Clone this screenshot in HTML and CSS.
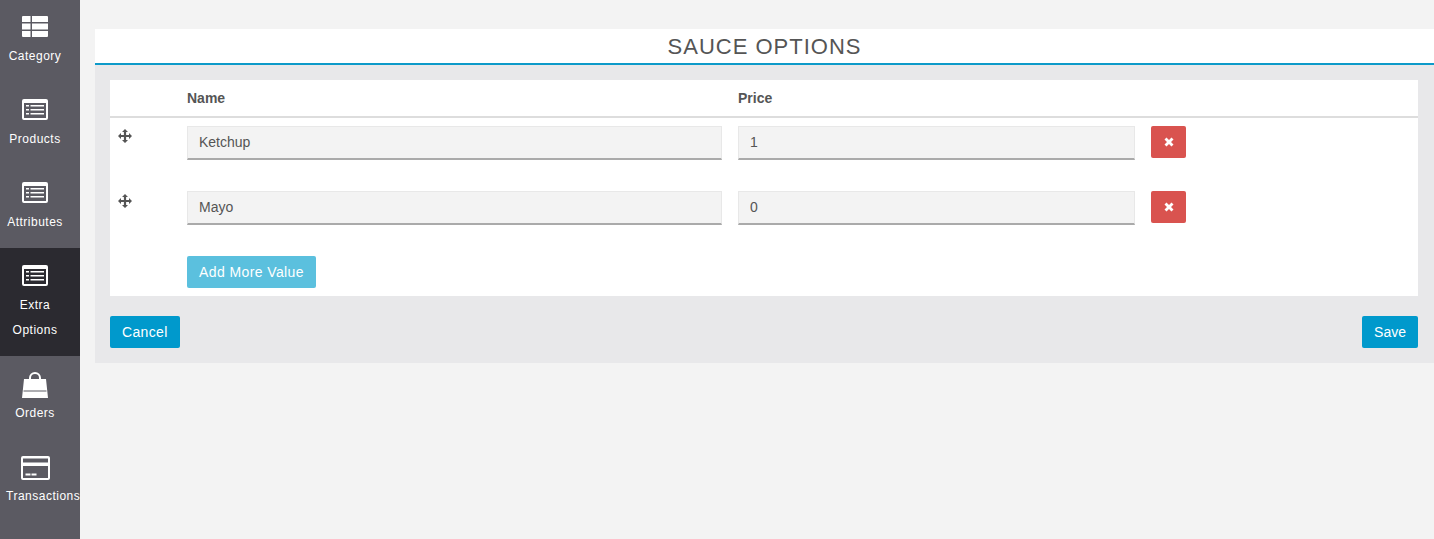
FILE: index.html
```html
<!DOCTYPE html>
<html lang="en">
<head>
    <meta charset="UTF-8">
    <title>Sauce Options</title>
    <link rel="stylesheet" href="styles.css">
</head>
<body>
    <svg class="defs" width="0" height="0">
        <symbol id="list-icon" viewBox="0 0 26 21">
            <path fill-rule="evenodd" d="M2 0h22a2 2 0 0 1 2 2v17a2 2 0 0 1-2 2H2a2 2 0 0 1-2-2V2a2 2 0 0 1 2-2zM2 4v15h22V4zM4 6h3v1.500H4zM8.500 6H22v1.500H8.500zM4 10h3v1.500H4zM8.500 10H22v1.500H8.500zM4 14h3v1.500H4zM8.500 14H22v1.500H8.500z" fill="#fff"/>
        </symbol>
        <symbol id="move-icon" viewBox="0 0 14 14">
            <path d="M7 0l3 3H8.100v2.900H11V4l3 3-3 3V8.100H8.100V11H10l-3 3-3-3h1.900V8.100H3V10L0 7l3-3v1.900h2.900V3H4z" fill="#555"/>
        </symbol>
    </svg>

    <nav class="sidebar">
        <a class="nav-item">
            <svg class="nav-icon" width="26" height="21" viewBox="0 0 26 21"><path d="M1 0h7.500v6H0V1a1 1 0 0 1 1-1zM10 0h15a1 1 0 0 1 1 1v5H10zM0 7.500h8.500v6H0zM10 7.500h16v6H10zM0 15h8.500v6H1a1 1 0 0 1-1-1zM10 15h16v5a1 1 0 0 1-1 1H10z" fill="#fff"/></svg>
            <span>Category</span>
        </a>
        <a class="nav-item">
            <svg class="nav-icon" width="26" height="21" viewBox="0 0 26 21"><use href="#list-icon"/></svg>
            <span>Products</span>
        </a>
        <a class="nav-item">
            <svg class="nav-icon" width="26" height="21" viewBox="0 0 26 21"><use href="#list-icon"/></svg>
            <span>Attributes</span>
        </a>
        <a class="nav-item active">
            <svg class="nav-icon" width="26" height="21" viewBox="0 0 26 21"><use href="#list-icon"/></svg>
            <span>Extra<br>Options</span>
        </a>
        <a class="nav-item nav-orders">
            <svg class="nav-icon" width="26" height="26" viewBox="0 0 26 26"><path fill-rule="evenodd" d="M2 7h22l2 19H0zM1.500 18.500v1h23v-1z" fill="#fff"/><path d="M8 11V6a5 5 0 0 1 10 0v5" fill="none" stroke="#fff" stroke-width="2"/></svg>
            <span>Orders</span>
        </a>
        <a class="nav-item nav-transactions">
            <svg class="nav-icon" width="29" height="24" viewBox="0 0 29 24"><path fill-rule="evenodd" d="M2 0h25a2 2 0 0 1 2 2v20a2 2 0 0 1-2 2H2a2 2 0 0 1-2-2V2a2 2 0 0 1 2-2zM2 2.500v4h25v-4zM2 10v12h25V10zM4.500 17.500h5v2h-5zM10.500 17.500h5v2h-5z" fill="#fff"/></svg>
            <span>Transactions</span>
        </a>
    </nav>

    <main class="content">
        <section class="panel">
            <h1 class="panel-title">SAUCE OPTIONS</h1>
            <div class="panel-body">
                <div class="table-card">
                    <div class="row head-row">
                        <div class="col-drag"></div>
                        <div class="col-name">Name</div>
                        <div class="col-price">Price</div>
                    </div>
                    <div class="row value-row">
                        <div class="col-drag"><svg class="drag-icon" width="14" height="14" viewBox="0 0 14 14"><use href="#move-icon"/></svg></div>
                        <div class="col-name"><input class="field" type="text" value="Ketchup"></div>
                        <div class="col-price"><input class="field" type="text" value="1"></div>
                        <button class="btn btn-remove"><svg width="10" height="10" viewBox="0 0 10 10"><path d="M2.500 0.500L5 3l2.500-2.500 2 2L7 5l2.500 2.500-2 2L5 7 2.500 9.500l-2-2L3 5 .5 2.500z" fill="#fff"/></svg></button>
                    </div>
                    <div class="row value-row">
                        <div class="col-drag"><svg class="drag-icon" width="14" height="14" viewBox="0 0 14 14"><use href="#move-icon"/></svg></div>
                        <div class="col-name"><input class="field" type="text" value="Mayo"></div>
                        <div class="col-price"><input class="field" type="text" value="0"></div>
                        <button class="btn btn-remove"><svg width="10" height="10" viewBox="0 0 10 10"><path d="M2.500 0.500L5 3l2.500-2.500 2 2L7 5l2.500 2.500-2 2L5 7 2.500 9.500l-2-2L3 5 .5 2.500z" fill="#fff"/></svg></button>
                    </div>
                    <div class="row add-row">
                        <div class="col-drag"></div>
                        <button class="btn btn-add">Add More Value</button>
                    </div>
                </div>
                <div class="actions">
                    <button class="btn btn-primary btn-cancel">Cancel</button>
                    <button class="btn btn-primary">Save</button>
                </div>
            </div>
        </section>
    </main>
</body>
</html>
```

FILE: styles.css
```css
* {
    margin: 0;
    padding: 0;
    box-sizing: border-box;
}

body {
    font-family: 'Liberation Sans', Arial, sans-serif;
    background: #f3f3f3;
    height: 100vh;
    display: flex;
    overflow: hidden;
}

.defs {
    position: absolute;
}

/* sidebar */
.sidebar {
    width: 80px;
    flex-shrink: 0;
    background: #5b5a62;
    overflow: hidden;
}

.nav-item {
    display: flex;
    flex-direction: column;
    align-items: center;
    height: 83px;
    padding: 17px 10px 0 0;
    color: #fff;
    font-size: 12px;
    text-align: center;
    white-space: nowrap;
}

.nav-item:first-child {
    height: 82px;
    padding-top: 16px;
}

.nav-item span {
    margin-top: 7px;
    line-height: 25px;
    letter-spacing: 0.5px;
}

.nav-item.active {
    height: 108px;
    background: #2b2a30;
}

.nav-orders {
    padding-top: 16px;
}

.nav-orders span {
    margin-top: 3px;
}

.nav-transactions span {
    align-self: flex-start;
    margin: 4px 0 0 6px;
}

.nav-icon {
    display: block;
    flex-shrink: 0;
}

/* main panel */
.content {
    flex: 1;
    padding: 29px 0 0 15px;
}

.panel {
    background: #e8e8ea;
}

.panel-title {
    background: #fff;
    border-bottom: 2px solid #0d9ac9;
    height: 36px;
    line-height: 36px;
    font-size: 22px;
    font-weight: normal;
    text-align: center;
    color: #555;
    letter-spacing: 1px;
}

.panel-body {
    padding: 15px 16px 15px 15px;
}

.table-card {
    background: #fff;
}

.row {
    display: flex;
}

.col-drag {
    width: 77px;
    flex-shrink: 0;
    padding: 3px 0 0 8px;
}

.drag-icon {
    display: block;
}

.col-name {
    width: 535px;
    margin-right: 16px;
}

.col-price {
    width: 397px;
    margin-right: 16px;
}

.head-row {
    height: 38px;
    align-items: center;
    border-bottom: 2px solid #ddd;
    font-size: 14px;
    font-weight: bold;
    color: #555;
}

.value-row {
    height: 65px;
    padding-top: 8px;
}

.field {
    width: 100%;
    height: 34px;
    padding: 0 11px 2px;
    background: #f3f3f3;
    border: 1px solid #e8e8e8;
    border-bottom: 2px solid #aaa;
    font-family: inherit;
    font-size: 14px;
    color: #555;
}

.btn {
    border: none;
    border-radius: 2px;
    color: #fff;
    font-family: inherit;
    font-size: 14px;
}

.btn-remove {
    display: flex;
    align-items: center;
    justify-content: center;
    width: 35px;
    height: 32px;
    background: #d9534f;
}

.add-row {
    height: 48px;
    padding-top: 8px;
}

.btn-add {
    width: 129px;
    height: 32px;
    background: #5bc0de;
    letter-spacing: 0.4px;
}

.actions {
    display: flex;
    justify-content: space-between;
    margin-top: 20px;
}

.btn-primary {
    height: 32px;
    padding: 0 12px;
    background: #0099cc;
}

.btn-cancel {
    letter-spacing: 0.35px;
}
```
